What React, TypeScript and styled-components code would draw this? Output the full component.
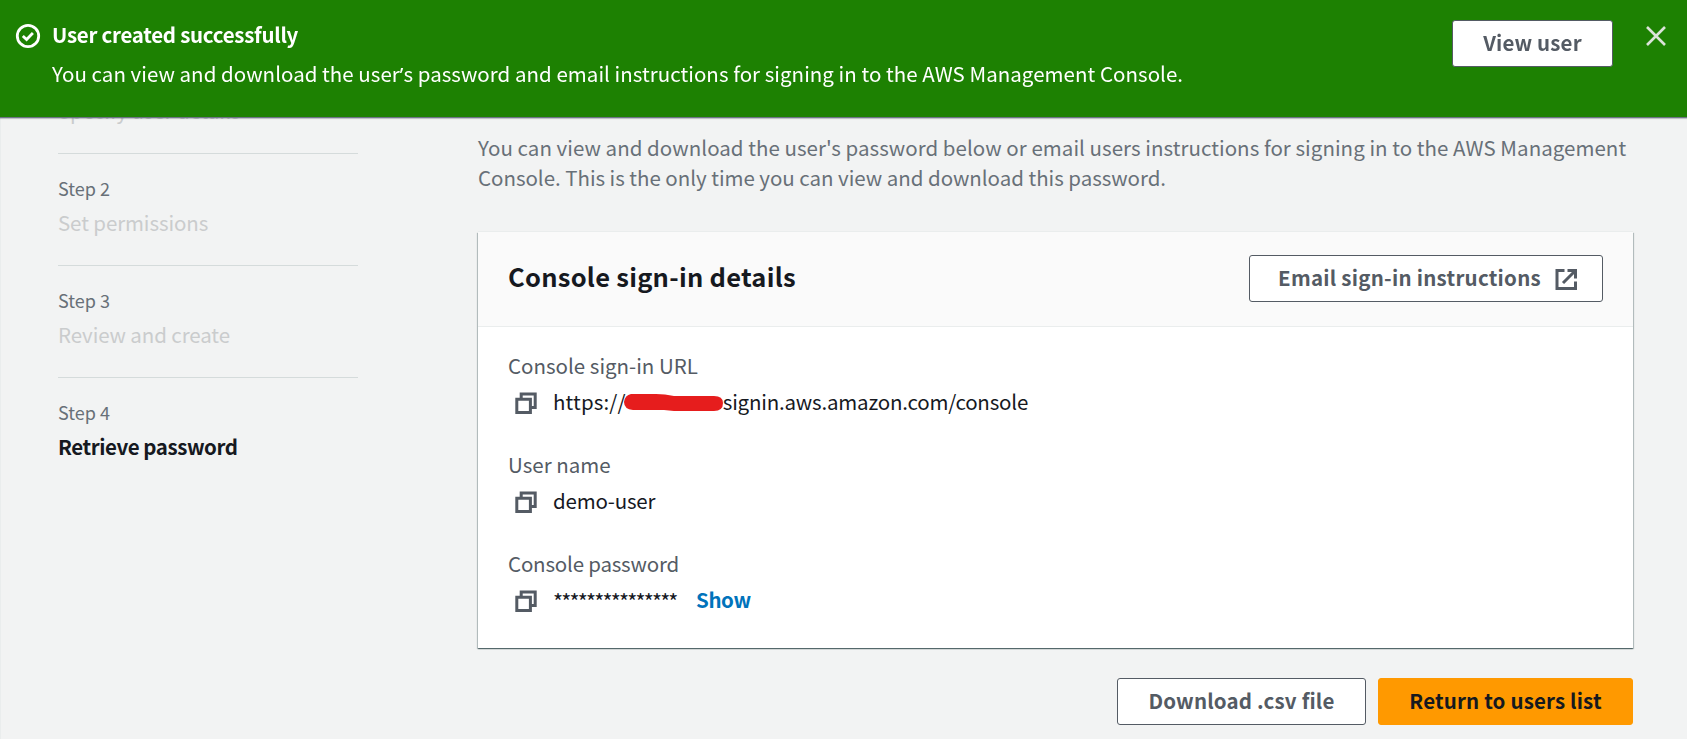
import React from "react";
import styled, { createGlobalStyle } from "styled-components";

const GlobalStyle = createGlobalStyle`
  *, *::before, *::after { box-sizing: border-box; }
  html, body { margin: 0; height: 100%; overflow: hidden; background: #f2f3f3; }
  body {
    font-family: "Noto Sans CJK SC", "Noto Sans", sans-serif;
    font-size: 20.5px;
    line-height: 30px;
    color: #16191f;
  }
  h2, p, ol, dl, dd { margin: 0; padding: 0; }
`;

const Page = styled.div`
  height: 739px;
  overflow: hidden;
  border-left: 1px solid #eaeded;
`;

const Flashbar = styled.header`
  position: fixed;
  inset: 0 0 auto 0;
  z-index: 2;
  display: flex;
  align-items: flex-start;
  height: 117px;
  padding: 19px 20px 0 15px;
  color: #fff;
  background: #1d8102;
  box-shadow: 0 1px 1px 0 #6d7486, 0 2px 1px 0 rgba(0, 28, 36, 0.15);
`;

const StatusIcon = styled.svg`
  flex: none;
  width: 26px;
  height: 26px;
  margin-top: 4px;
`;

const FlashText = styled.div`
  flex: 1;
  margin-left: 11px;
  white-space: nowrap;
`;

const FlashTitle = styled.p`
  font-weight: 700;
  letter-spacing: -0.27px;
`;

const FlashMessage = styled.p`
  margin-top: 9px;
  letter-spacing: 0.035px;
`;

const Apostrophe = styled.span`
  font-family: "Noto Sans", sans-serif;
  line-height: 1;
`;

const Button = styled.button<{ $primary?: boolean; $width: number; $track?: number }>`
  display: inline-flex;
  align-items: center;
  justify-content: center;
  gap: 13px;
  flex: none;
  width: ${(p) => p.$width}px;
  height: 47px;
  padding: 0 0 4px;
  font: inherit;
  font-weight: 700;
  letter-spacing: ${(p) => p.$track ?? 0.16}px;
  white-space: nowrap;
  color: ${(p) => (p.$primary ? "#16191f" : "#545b64")};
  background: ${(p) => (p.$primary ? "#ff9900" : "#fff")};
  border: 1px solid ${(p) => (p.$primary ? "#ff9900" : "#545b64")};
  border-radius: 3px;
`;

const ViewButton = styled(Button)`
  margin-top: 1px;
`;

const EmailButton = styled(Button)`
  padding: 0 0 3px 4px;
`;

const ExternalIcon = styled.svg`
  flex: none;
  width: 24px;
  height: 24px;
  margin-top: 5px;
`;

const CloseButton = styled.button`
  flex: none;
  display: flex;
  margin: 6px 0 0 32px;
  padding: 0;
  border: 0;
  background: none;
  color: #dbe3d9;
`;

const Layout = styled.main`
  display: grid;
  grid-template-columns: 300px 1155px;
  column-gap: 120px;
  padding: 42px 0 0 57px;
`;

const Steps = styled.ol`
  list-style: none;
`;

const Step = styled.li`
  display: flex;
  flex-direction: column;
  justify-content: flex-end;
  height: 112px;
  padding-bottom: 28px;
  border-bottom: 1px solid #d5dbdb;
  &:last-child { border-bottom-color: transparent; }
`;

const StepNumber = styled.div`
  font-size: 18px;
  line-height: 24px;
  color: #687078;
`;

const StepName = styled.div<{ $current?: boolean }>`
  margin-top: 7px;
  font-weight: ${(p) => (p.$current ? 700 : 400)};
  letter-spacing: ${(p) => (p.$current ? "-0.43px" : "-0.1px")};
  color: ${(p) => (p.$current ? "#16191f" : "#cacccd")};
`;

const Content = styled.section`
  padding-top: 90px;
`;

const Intro = styled.div`
  color: #687078;
  white-space: nowrap;
`;

const IntroLine = styled.p<{ $track: number }>`
  letter-spacing: ${(p) => p.$track}px;
`;

const Card = styled.section`
  margin-top: 40px;
  height: 416px;
  background: #fff;
  box-shadow: 0 1px 1px 0 rgba(0, 28, 36, 0.45), 1px 1px 1px 0 rgba(0, 28, 36, 0.2),
    -1px 1px 1px 0 rgba(0, 28, 36, 0.2), 0 -1px 0 0 #eaeded;
`;

const CardHeader = styled.div`
  display: flex;
  align-items: center;
  justify-content: space-between;
  height: 95px;
  padding: 0 30px 2px;
  background: #fafafa;
  border-bottom: 1px solid #eaeded;
`;

const CardTitle = styled.h2`
  padding-bottom: 4px;
  font-size: 25.5px;
  line-height: 36px;
  letter-spacing: 0.25px;
`;

const Fields = styled.dl`
  display: flex;
  flex-direction: column;
  gap: 33px;
  padding: 23px 30px 0;
`;

const Label = styled.dt<{ $track?: number }>`
  letter-spacing: ${(p) => p.$track ?? 0}px;
  color: #545b64;
`;

const Value = styled.dd`
  display: flex;
  align-items: center;
  height: 30px;
  margin-top: 6px;
  padding-left: 6px;
  letter-spacing: -0.2px;
  white-space: nowrap;
`;

const CopyIcon = styled.svg`
  flex: none;
  width: 24px;
  height: 24px;
  margin: 4px 15px 0 0;
`;

const Scheme = styled.span`
  letter-spacing: 0.15px;
`;

const Redaction = styled.svg`
  flex: none;
  width: 101px;
  height: 20px;
  margin: 1px -1px 0 -3px;
`;

const Mask = styled.span`
  width: 143px;
  padding-top: 4px;
  font-size: 21.5px;
  letter-spacing: -1.8px;
`;

const ShowLink = styled.a`
  font-weight: 700;
  letter-spacing: -0.4px;
  color: #0073bb;
`;

const Actions = styled.div`
  display: flex;
  justify-content: flex-end;
  gap: 12px;
  margin-top: 30px;
`;

const Copy = () => (
  <CopyIcon viewBox="0 0 24 24" fill="none" stroke="#545b64" strokeWidth="3">
    <path d="M2.8 8.2h13.6v13.4H2.8z" />
    <path d="M7.2 8V3h14v13.4h-4.6" />
  </CopyIcon>
);

const steps = [
  { name: "Specify user details" },
  { number: 2, name: "Set permissions" },
  { number: 3, name: "Review and create" },
  { number: 4, name: "Retrieve password", current: true },
];

export default function App() {
  return (
    <>
      <GlobalStyle />
      <Page>
        <Flashbar>
          <StatusIcon viewBox="0 0 26 26" fill="none" stroke="#fff" strokeWidth="2.8">
            <circle cx="13" cy="13" r="10.7" />
            <path d="M7.8 12.9l3.8 3.6 6.3-6.4" />
          </StatusIcon>
          <FlashText>
            <FlashTitle>User created successfully</FlashTitle>
            <FlashMessage>
              You can view and download the user<Apostrophe>’</Apostrophe>s password and email instructions for signing in to the AWS Management Console.
            </FlashMessage>
          </FlashText>
          <ViewButton $width={161}>View user</ViewButton>
          <CloseButton aria-label="Close">
            <svg width="22" height="22" viewBox="0 0 22 22" fill="none" stroke="currentColor" strokeWidth="2.6">
              <path d="M2 2l18 18M20 2L2 20" />
            </svg>
          </CloseButton>
        </Flashbar>
        <Layout>
          <Steps>
            {steps.map((step) => (
              <Step key={step.name}>
                {step.number && <StepNumber>Step {step.number}</StepNumber>}
                <StepName $current={step.current}>{step.name}</StepName>
              </Step>
            ))}
          </Steps>
          <Content>
            <Intro>
              <IntroLine $track={0.04}>
                You can view and download the user's password below or email users instructions for signing in to the AWS Management
              </IntroLine>
              <IntroLine $track={-0.03}>
                Console. This is the only time you can view and download this password.
              </IntroLine>
            </Intro>
            <Card>
              <CardHeader>
                <CardTitle>Console sign-in details</CardTitle>
                <EmailButton $width={354} $track={0.25}>
                  Email sign-in instructions
                  <ExternalIcon viewBox="0 0 24 24" fill="none" stroke="currentColor" strokeWidth="3">
                    <path d="M10.5 3.5H3v18h18.5V14.5M13.5 3.5h8v8M21 4L9 16" />
                  </ExternalIcon>
                </EmailButton>
              </CardHeader>
              <Fields>
                <div>
                  <Label>Console sign-in URL</Label>
                  <Value>
                    <Copy />
                    <Scheme>https://</Scheme>
                    <Redaction viewBox="0 0 101 20">
                      <path d="M8 2H33Q42 2 51 4H91Q100 4 100 11Q100 19 91 19H51L41 18H10Q1 17 1 10Q2 3 8 2Z" fill="#e61d1d" />
                    </Redaction>
                    signin.aws.amazon.com/console
                  </Value>
                </div>
                <div>
                  <Label>User name</Label>
                  <Value>
                    <Copy />
                    demo-user
                  </Value>
                </div>
                <div>
                  <Label $track={-0.2}>Console password</Label>
                  <Value>
                    <Copy />
                    <Mask>***************</Mask>
                    <ShowLink>Show</ShowLink>
                  </Value>
                </div>
              </Fields>
            </Card>
            <Actions>
              <Button $width={249}>Download .csv file</Button>
              <Button $primary $width={255}>Return to users list</Button>
            </Actions>
          </Content>
        </Layout>
      </Page>
    </>
  );
}
